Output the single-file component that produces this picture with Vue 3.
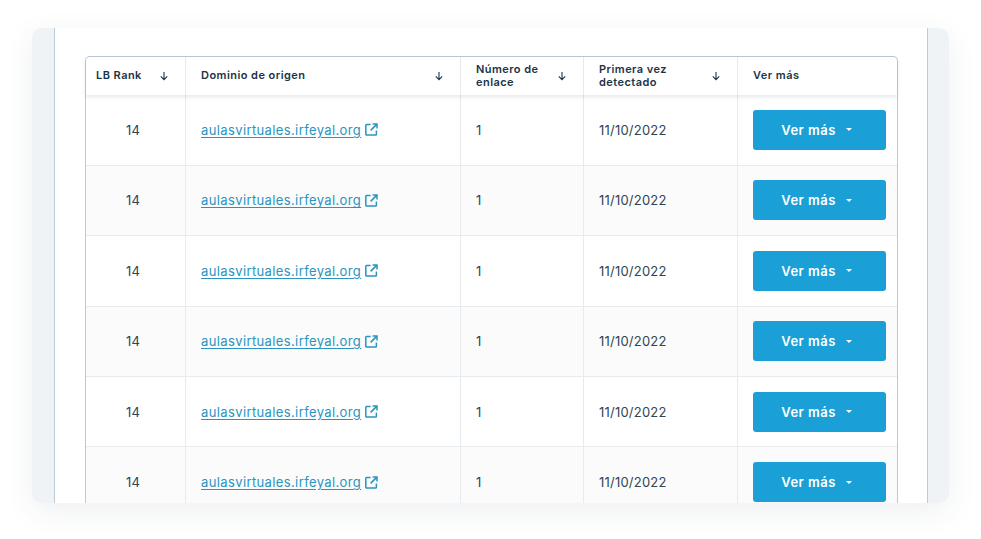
<script setup>
const rows = [1, 2, 3, 4, 5, 6]
const heads = [
  { label: 'LB Rank', sort: true },
  { label: 'Dominio de origen', sort: true },
  { label: 'Número de enlace', sort: true },
  { label: 'Primera vez detectado', sort: true },
  { label: 'Ver más', sort: false },
]
</script>

<template>
  <div class="page">
    <div class="frame">
      <div class="sheet">
        <div class="table">
          <div class="row head">
            <div v-for="h in heads" :key="h.label" class="th">
              <span class="th-label">{{ h.label }}</span>
              <svg v-if="h.sort" class="arrow" width="10" height="10" viewBox="0 0 10 10" fill="none" stroke="#1b3446" stroke-width="1.1">
                <path d="M5 1v7.6M1.8 5.4 5 8.6l3.2-3.2" />
              </svg>
            </div>
          </div>
          <div v-for="r in rows" :key="r" class="row body" :class="{ odd: r % 2 === 0 }">
            <div class="td rank">14</div>
            <div class="td">
              <a class="link" href="#">aulasvirtuales.irfeyal.org</a>
              <svg class="ext" width="13" height="13" viewBox="0 0 13 13" fill="none" stroke="#2a94be" stroke-width="1.5">
                <path d="M5.6 1.4H1.6a.8.8 0 0 0-.8.8v9a.8.8 0 0 0 .8.8h9a.8.8 0 0 0 .8-.8V7.4" />
                <path d="M7.6 1h4.4v4.4M11.9 1.1 5.6 7.4" />
              </svg>
            </div>
            <div class="td">1</div>
            <div class="td">11/10/2022</div>
            <div class="td btn-cell">
              <button class="btn" type="button">
                Ver más
                <span class="caret"></span>
              </button>
            </div>
          </div>
        </div>
      </div>
    </div>
  </div>
</template>

<style>
html, body { margin: 0; background: #fff; }
</style>

<style scoped>
.page {
  width: 981px;
  height: 539px;
  box-sizing: border-box;
  padding: 28px 32px 36px;
  overflow: hidden;
  font-family: Inter, "Liberation Sans", sans-serif;
}
.frame {
  width: 917px;
  height: 475px;
  box-sizing: border-box;
  padding: 0 21px 0 22px;
  background: #eff3f6;
  border-radius: 10px;
  overflow: clip;
  box-shadow: 0 8px 30px rgba(40, 60, 80, 0.08);
}
.sheet {
  height: 100%;
  box-sizing: border-box;
  background: #fff;
  border-left: 1px solid #bccad5;
  border-right: 1px solid #bccad5;
  padding: 28px 30px 0;
  overflow: hidden;
}
.table {
  border: 1px solid #b9c9d5;
  border-bottom: 0;
  border-radius: 5px 5px 0 0;
  width: 813px;
  box-sizing: border-box;
}
.row {
  display: grid;
  grid-template-columns: 100px 275px 123px 154px 1fr;
}
.head {
  height: 38px;
  position: relative;
  box-shadow: 0 2px 4px rgba(40, 60, 80, 0.12);
}
.body {
  height: 70.4px;
  box-sizing: border-box;
  border-top: 1px solid #e5ebef;
}
.head + .body { border-top: 0; height: 69.8px; }
.odd { background: #fbfbfb; }
.th, .td {
  display: flex;
  align-items: center;
  box-sizing: border-box;
  border-right: 1px solid #e5ebef;
  padding-left: 15px;
}
.th:last-child, .td:last-child { border-right: 0; }
.th {
  justify-content: space-between;
  padding-right: 16px;
  font-size: 11px;
  font-weight: 600;
  line-height: 13px;
  letter-spacing: 0.45px;
  color: #1b3446;
}
.th:first-child { padding-left: 10px; padding-right: 16px; }
.th:nth-child(1), .th:nth-child(2), .th:nth-child(5) { padding-bottom: 1px; }
.th:nth-child(2) .th-label { max-width: none; }
.th-label { max-width: 90px; }
.arrow { flex: none; }
.td {
  font-size: 13px;
  letter-spacing: 0.22px;
  color: #2f4557;
}
.rank { justify-content: center; padding-left: 0; padding-right: 5px; }
.link {
  color: #2a94be;
  text-decoration: underline;
  text-underline-offset: 2px;
  letter-spacing: 0.38px;
}
.ext { margin-left: 4px; flex: none; }
.btn-cell { padding-right: 11px; }
.btn {
  width: 133px;
  height: 40px;
  border: 0;
  border-radius: 3px;
  background: #1a9fd6;
  color: #fff;
  font: 600 13px Inter, "Liberation Sans", sans-serif;
  letter-spacing: 0.5px;
  display: flex;
  align-items: center;
  justify-content: center;
  padding: 0 6px 0 0;
  gap: 10px;
}
.caret {
  width: 0;
  height: 0;
  border-left: 3px solid transparent;
  border-right: 3px solid transparent;
  border-top: 3px solid #fff;
}
</style>
